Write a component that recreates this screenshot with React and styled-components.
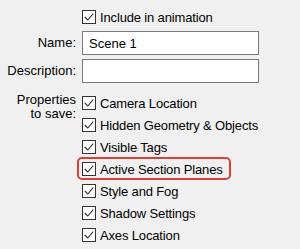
import React from 'react';
import styled, { createGlobalStyle } from 'styled-components';

const GlobalStyle = createGlobalStyle`
  html, body {
    margin: 0;
    padding: 0;
    background: #f0f0f0;
  }
  body {
    font-family: "Liberation Sans", Arial, sans-serif;
    font-size: 13px;
    color: #000;
  }
`;

const PROPERTIES = [
  { label: 'Camera Location' },
  { label: 'Hidden Geometry & Objects' },
  { label: 'Visible Tags' },
  { label: 'Active Section Planes', highlighted: true },
  { label: 'Style and Fog' },
  { label: 'Shadow Settings' },
  { label: 'Axes Location' },
];

const Panel = styled.div`
  width: 300px;
  height: 249px;
  display: flex;
  flex-direction: column;
  padding-top: 6px;
  box-sizing: border-box;
  overflow: hidden;
`;

const Row = styled.div`
  display: grid;
  grid-template-columns: 76px 1fr;
  column-gap: 6px;
  align-items: ${(p) => (p.$top ? 'start' : 'center')};
  margin-top: ${(p) => p.$mt || 0}px;
`;

const Label = styled.div`
  text-align: right;
  line-height: 14px;
  white-space: nowrap;
  padding-top: ${(p) => (p.$top ? 1 : 0)}px;
`;

const TextInput = styled.div`
  width: 177px;
  height: 24px;
  box-sizing: border-box;
  border: 1px solid #7a7a7a;
  background: #fff;
  display: flex;
  align-items: center;
  padding-left: 6px;
`;

const CheckList = styled.div`
  display: flex;
  flex-direction: column;
  align-items: flex-start;
`;

const CheckRow = styled.label`
  position: relative;
  display: inline-flex;
  align-items: center;
  gap: 4px;
  height: 22px;
  white-space: nowrap;
  letter-spacing: -0.15px;

  ${(p) =>
    p.$highlighted &&
    `
    &::after {
      content: '';
      position: absolute;
      left: -5px;
      right: -8px;
      top: -1px;
      bottom: 0;
      border: 2.5px solid #d8403a;
      border-radius: 5px;
      pointer-events: none;
    }
  `}
`;

const Box = styled.span`
  width: 14px;
  height: 14px;
  box-sizing: border-box;
  border: 1px solid #333;
  background: #fff;
  display: inline-flex;
  align-items: center;
  justify-content: center;
`;

function Checkbox({ label, highlighted }) {
  return (
    <CheckRow $highlighted={highlighted}>
      <Box>
        <svg width="12" height="12" viewBox="0 0 12 12">
          <polyline
            points="1.8,6 4.8,9 10.2,2.6"
            fill="none"
            stroke="#333"
            strokeWidth="1.1"
          />
        </svg>
      </Box>
      <span>{label}</span>
    </CheckRow>
  );
}

export default function App() {
  return (
    <>
      <GlobalStyle />
      <Panel>
        <Row>
          <Label />
          <div>
            <Checkbox label="Include in animation" />
          </div>
        </Row>
        <Row $mt={3}>
          <Label>Name:</Label>
          <TextInput>Scene 1</TextInput>
        </Row>
        <Row $mt={4}>
          <Label>Description:</Label>
          <TextInput />
        </Row>
        <Row $mt={9} $top>
          <Label $top>
            Properties
            <br />
            to save:
          </Label>
          <CheckList>
            {PROPERTIES.map((p) => (
              <Checkbox key={p.label} label={p.label} highlighted={p.highlighted} />
            ))}
          </CheckList>
        </Row>
      </Panel>
    </>
  );
}
